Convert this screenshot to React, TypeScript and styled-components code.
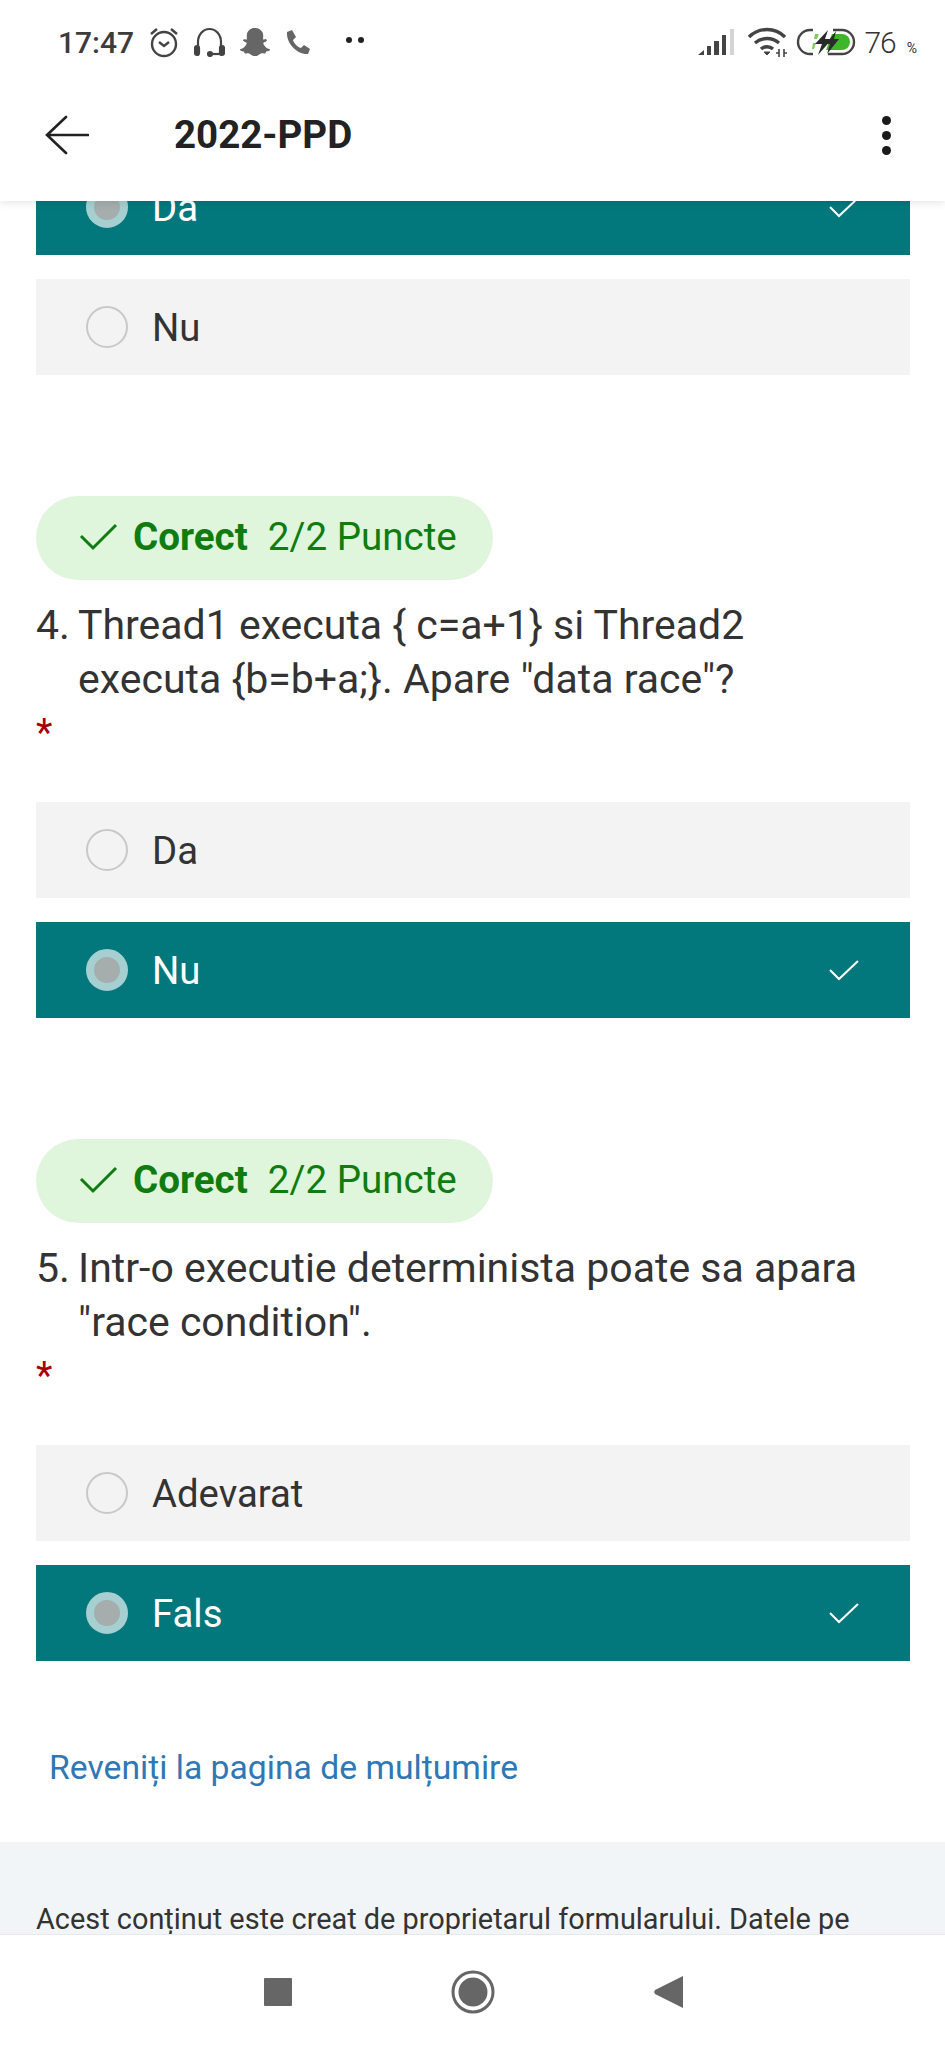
import { styled, createGlobalStyle } from 'styled-components';
import { FaSnapchatGhost } from 'react-icons/fa';

const GlobalStyle = createGlobalStyle`
  html, body {
    margin: 0;
    padding: 0;
    background: #fff;
    font-family: Roboto, "Liberation Sans", sans-serif;
  }
  * {
    box-sizing: border-box;
  }
`;

const Phone = styled.div`
  width: 945px;
  height: 2048px;
  display: flex;
  flex-direction: column;
  overflow: hidden;
  background: #fff;
`;

// status bar + toolbar
const Header = styled.header`
  position: relative;
  z-index: 2;
  height: 201px;
  flex: none;
  background: #fff;
  box-shadow: 0 2px 8px rgba(0, 0, 0, 0.1);
`;
const StatusBar = styled.div`
  height: 84px;
  padding: 0 28px 0 58px;
  display: flex;
  align-items: center;
  justify-content: space-between;
`;
const StatusLeft = styled.div`
  display: flex;
  align-items: center;
`;
const Clock = styled.span`
  font-size: 30px;
  font-weight: 500;
  color: #3c3c3c;
  margin-right: 15px;
`;
const StatusIcons = styled.div`
  display: flex;
  align-items: center;
  gap: 15px;
  color: #555;
`;
const TwoDots = styled.div`
  display: flex;
  gap: 6px;
  margin-left: 35px;
  margin-top: -4px;
  i {
    width: 6px;
    height: 6px;
    border-radius: 50%;
    background: #222;
  }
`;
const StatusRight = styled.div`
  display: flex;
  align-items: center;
`;
const Battery = styled.span`
  font-size: 30px;
  font-weight: 300;
  color: #333;
  margin-left: 8px;
  letter-spacing: -1px;
  small {
    font-size: 14px;
    font-weight: 400;
    margin-left: 11px;
    letter-spacing: 0;
  }
`;
const Toolbar = styled.div`
  height: 102px;
  padding: 0 54px 0 45px;
  display: flex;
  align-items: center;
`;
const Title = styled.h1`
  margin: 0 0 0 85px;
  flex: 1;
  font-size: 38.5px;
  line-height: 42px;
  font-weight: 700;
  color: #222;
`;
const MenuDots = styled.div`
  display: flex;
  flex-direction: column;
  gap: 6px;
  i {
    width: 9px;
    height: 9px;
    border-radius: 50%;
    background: #1a1a1a;
  }
`;

const Scroll = styled.main`
  flex: 1;
  min-height: 0;
  overflow: hidden;
`;
const ScrollInner = styled.div`
  margin-top: -42px;
`;

const Section = styled.section<{ $gap: number }>`
  padding: 0 35px 0 36px;
  margin-top: ${(p) => p.$gap}px;
`;
const Option = styled.div<{ $selected?: boolean }>`
  height: 96px;
  padding: 0 0 0 50px;
  margin-bottom: 24px;
  display: flex;
  align-items: center;
  background: ${(p) => (p.$selected ? '#03787c' : '#f3f3f3')};
  color: ${(p) => (p.$selected ? '#fff' : '#333')};
  font-size: 38.3px;
`;
const Radio = styled.span<{ $selected?: boolean }>`
  width: 42px;
  height: 42px;
  border-radius: 50%;
  flex: none;
  margin-right: 24px;
  background: ${(p) => (p.$selected ? '#a5adad' : 'transparent')};
  border: ${(p) => (p.$selected ? '8px solid #a5cfd0' : '2px solid #c8c8c8')};
`;
const OptionLabel = styled.span`
  flex: 1;
`;
const OptionCheck = styled.svg`
  width: 32px;
  height: 24px;
  margin-right: 50px;
`;
const Pill = styled.div`
  width: 457px;
  height: 84px;
  border-radius: 42px;
  padding: 0 0 3px 43px;
  display: flex;
  align-items: center;
  background: #dff6dd;
  color: #107c10;
  font-size: 38.6px;
`;
const PillCheck = styled.svg`
  width: 39px;
  height: 29px;
  margin-right: 15px;
`;
const PillStrong = styled.strong`
  font-weight: 700;
  margin-right: 20px;
`;
const Question = styled.div`
  margin-top: 18px;
  display: flex;
  font-size: 41px;
  line-height: 54px;
  color: #333;
`;
const QuestionNumber = styled.span`
  width: 42px;
  flex: none;
`;
const QuestionText = styled.span`
  max-width: 800px;
`;
const Required = styled.div`
  height: 96px;
  color: #a80000;
  font-size: 38px;
  line-height: 54px;
`;
const BackLink = styled.a`
  display: block;
  margin: 87px 0 0 13px;
  font-size: 33.7px;
  line-height: 40px;
  color: #2f78b5;
`;
const Footer = styled.footer`
  margin-top: 54px;
  height: 200px;
  padding: 55px 36px 0;
  background: #f1f5f8;
  color: #333;
  font-size: 28.9px;
  line-height: 44px;
  white-space: nowrap;
`;

const NavBar = styled.nav`
  position: relative;
  z-index: 2;
  height: 114px;
  flex: none;
  background: #fff;
  border-top: 1px solid #e6e9ec;
  display: flex;
  align-items: center;
  justify-content: center;
`;
const NavSlot = styled.div`
  width: 195px;
  display: flex;
  justify-content: center;
`;

const Check = () => (
  <OptionCheck viewBox="0 0 32 24" fill="none" stroke="#fff" strokeWidth="2">
    <path d="M2 12l9 9L30 3" />
  </OptionCheck>
);

const Correct = () => (
  <Pill>
    <PillCheck viewBox="0 0 39 29" fill="none" stroke="#107c10" strokeWidth="3">
      <path d="M2 14l12 12L37 3" />
    </PillCheck>
    <PillStrong>Corect</PillStrong>2/2 Puncte
  </Pill>
);

export default function App() {
  return (
    <Phone>
      <GlobalStyle />
      <Header>
        <StatusBar>
          <StatusLeft>
            <Clock>17:47</Clock>
            <StatusIcons>
              <svg width="30" height="31" viewBox="0 0 30 31" fill="none" stroke="#444" strokeWidth="2.4">
                <circle cx="15" cy="17" r="12" />
                <path d="M10 15l5 4 5-4M2 7l6-5M28 7l-6-5" />
              </svg>
              <svg width="31" height="30" viewBox="0 0 31 30" fill="none" stroke="#444" strokeWidth="2.2">
                <path d="M4 20V15a11.500 13 0 0 1 23 0v5" />
                <path d="M27 27h-10" />
                <rect x="1" y="19" width="4" height="9" rx="2" fill="#444" />
                <rect x="26" y="19" width="4" height="9" rx="2" fill="#444" />
                <circle cx="16" cy="27" r="2" fill="#444" />
              </svg>
              <FaSnapchatGhost size={30} color="#666" />
              <svg width="26" height="26" viewBox="0 0 26 26" fill="#666">
                <path d="M2 3l5-2 4 7-3 3c1 3 4 7 8 8l3-3 6 4-2 5c-10 1-22-10-21-22z" />
              </svg>
            </StatusIcons>
            <TwoDots>
              <i />
              <i />
            </TwoDots>
          </StatusLeft>
          <StatusRight>
            <svg width="36" height="27" viewBox="0 0 36 27" fill="#444">
              <path d="M0 26l6-5v5zM9 17h4v9H9zM16 12h5v14h-5zM24 6h4v20h-4z" />
              <path d="M32 0h4v26h-4z" fill="#d4d4d4" />
            </svg>
            <svg width="40" height="31" viewBox="0 0 40 31" fill="none" stroke="#444" strokeWidth="3.4" style={{ marginLeft: 14 }}>
              <path d="M1 10c10-10 26-10 36 0M7 16c7-6 17-6 24 0M13 22c3-3 9-3 12 0" />
              <path d="M16 25h6l-3 3z" fill="#444" strokeWidth="1" />
              <path d="M31 22v8M36 22v8M28 26h3M36 26h3" strokeWidth="1.6" />
            </svg>
            <svg width="60" height="28" viewBox="0 0 60 28" style={{ marginLeft: 8 }}>
              <path d="M17 2H14A12 12 0 0 0 14 26H17M37 2H46A12 12 0 0 1 46 26H32" fill="none" stroke="#444" strokeWidth="2.4" />
              <path d="M36 6H46A8 8 0 0 1 46 22H30z" fill="#3fb52a" />
              <path d="M19 6h4l-2 5h-3zM17 15h3l-2 6h-2z" fill="#7fcf5f" />
              <path d="M19 16l13-14-3 9h7L22 27l4-11zM30 16l10-13-2 8h5L31 26l3-10z" fill="#2a2a2a" />
            </svg>
            <Battery>
              76<small>%</small>
            </Battery>
          </StatusRight>
        </StatusBar>
        <Toolbar>
          <svg width="44" height="40" viewBox="0 0 44 40" fill="none" stroke="#222" strokeWidth="2.6" strokeLinecap="round">
            <path d="M43 20H2M21 2L2 20l19 18" />
          </svg>
          <Title>2022-PPD</Title>
          <MenuDots>
            <i />
            <i />
            <i />
          </MenuDots>
        </Toolbar>
      </Header>
      <Scroll>
        <ScrollInner>
          <Section $gap={0}>
            <Option $selected>
              <Radio $selected />
              <OptionLabel>Da</OptionLabel>
              <Check />
            </Option>
            <Option>
              <Radio />
              <OptionLabel>Nu</OptionLabel>
            </Option>
          </Section>
          <Section $gap={121}>
            <Correct />
            <Question>
              <QuestionNumber>4.</QuestionNumber>
              <QuestionText>Thread1 executa {'{'} c=a+1{'}'} si Thread2 executa {'{'}b=b+a;{'}'}. Apare "data race"?</QuestionText>
            </Question>
            <Required>*</Required>
            <Option>
              <Radio />
              <OptionLabel>Da</OptionLabel>
            </Option>
            <Option $selected>
              <Radio $selected />
              <OptionLabel>Nu</OptionLabel>
              <Check />
            </Option>
          </Section>
          <Section $gap={121}>
            <Correct />
            <Question>
              <QuestionNumber>5.</QuestionNumber>
              <QuestionText>Intr-o executie determinista poate sa apara "race condition".</QuestionText>
            </Question>
            <Required>*</Required>
            <Option>
              <Radio />
              <OptionLabel>Adevarat</OptionLabel>
            </Option>
            <Option $selected>
              <Radio $selected />
              <OptionLabel>Fals</OptionLabel>
              <Check />
            </Option>
            <BackLink>Reveniți la pagina de mulțumire</BackLink>
          </Section>
          <Footer>Acest conținut este creat de proprietarul formularului. Datele pe</Footer>
        </ScrollInner>
      </Scroll>
      <NavBar>
        <NavSlot>
          <svg width="28" height="28" viewBox="0 0 28 28">
            <rect width="28" height="28" rx="1" fill="#666" />
          </svg>
        </NavSlot>
        <NavSlot>
          <svg width="44" height="44" viewBox="0 0 44 44">
            <circle cx="22" cy="22" r="20" fill="none" stroke="#666" strokeWidth="3" />
            <circle cx="22" cy="22" r="14.500" fill="#666" />
          </svg>
        </NavSlot>
        <NavSlot>
          <svg width="30" height="32" viewBox="0 0 30 32">
            <path d="M30 0v32L2 18a3 3 0 0 1 0-4z" fill="#666" />
          </svg>
        </NavSlot>
      </NavBar>
    </Phone>
  );
}
